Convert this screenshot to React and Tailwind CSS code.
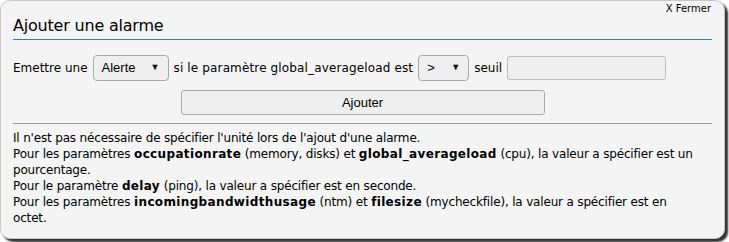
import React from "react";

const font = { fontFamily: '"DejaVu Sans", Verdana, sans-serif' };

export default function App() {
  return (
    <div className="w-[729px] h-[242px] bg-white">
      <div
        className="w-[725px] h-[239px] rounded-[10px] border border-[#c8c8c8] bg-[#f4f4f4] shadow-[3px_3px_2px_#333] px-[12px] pt-[2px] text-black"
        style={font}
      >
        <div className="flex justify-end pr-[1px] text-[10px] leading-[12px]">
          X Fermer
        </div>
        <h2 className="text-[16px] leading-[20px] pt-[1px] pb-[3px] border-b border-[#2a87b3] tracking-[-0.2px]">
          Ajouter une alarme
        </h2>
        <div className="flex items-center gap-[5px] mt-[15px] text-[12px]">
          <span>Emettre une</span>
          <div className="w-[76px] h-[26px] rounded-[4px] border border-[#aaa] bg-[#efefef] flex items-center justify-between px-[8px] text-[13px] font-['Liberation_Sans',Arial,sans-serif]">
            <span>Alerte</span>
            <span className="text-[9px]">▼</span>
          </div>
          <span className="tracking-[0.14px]">si le paramètre global_averageload est</span>
          <div className="w-[51px] h-[26px] rounded-[4px] border border-[#aaa] bg-[#efefef] flex items-center justify-between px-[8px] text-[13px] font-['Liberation_Sans',Arial,sans-serif]">
            <span>&gt;</span>
            <span className="text-[9px]">▼</span>
          </div>
          <span>seuil</span>
          <div className="w-[159px] h-[24px] rounded-[3px] border border-[#bbb] bg-[#efefef]" />
        </div>
        <div className="flex justify-center mt-[9px]">
          <button className="w-[364px] h-[25px] rounded-[3px] border border-[#aaa] bg-[#efefef] text-[13px] font-['Liberation_Sans',Arial,sans-serif]">
            Ajouter
          </button>
        </div>
        <div className="mt-[8px] border-t border-[#999] pt-[6px]">
          <div className="pr-[12px] text-[12px] leading-[16px] tracking-[-0.17px] [&_b]:tracking-[0.35px]">
            <p>Il n'est pas nécessaire de spécifier l'unité lors de l'ajout d'une alarme.</p>
            <p>
              Pour les paramètres <b>occupationrate</b> (memory, disks) et <b>global_averageload</b> (cpu), la valeur a spécifier est un pourcentage.
            </p>
            <p>
              Pour le paramètre <b>delay</b> (ping), la valeur a spécifier est en seconde.
            </p>
            <p>
              Pour les paramètres <b>incomingbandwidthusage</b> (ntm) et <b>filesize</b> (mycheckfile), la valeur a spécifier est en octet.
            </p>
          </div>
        </div>
      </div>
    </div>
  );
}
